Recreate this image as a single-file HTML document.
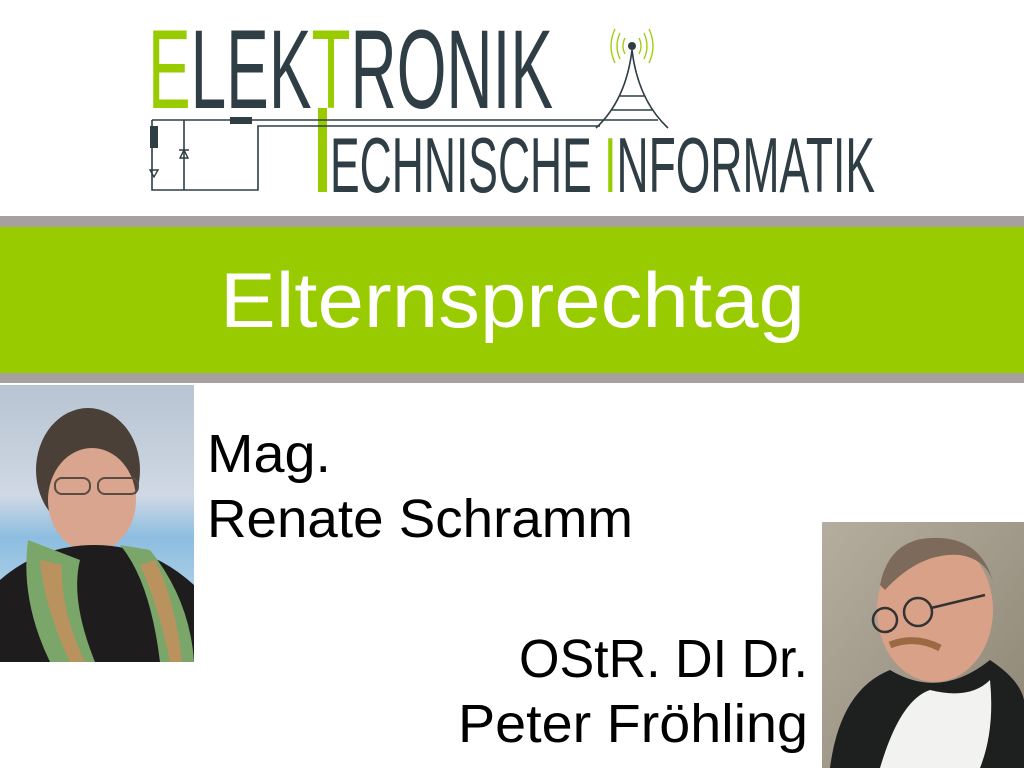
<!DOCTYPE html>
<html><head><meta charset="utf-8"><style>
html,body{margin:0;padding:0;background:#fff;width:1024px;height:768px;overflow:hidden}
svg{display:block}
</style></head><body>
<svg width="1024" height="768" viewBox="0 0 1024 768" xmlns="http://www.w3.org/2000/svg">
<rect width="1024" height="768" fill="#fff"/>
<g font-family="Liberation Sans, sans-serif" fill="#2f3e44">
<text x="148" y="108" font-size="112" textLength="405" lengthAdjust="spacingAndGlyphs"><tspan fill="#99cc00">E</tspan>LEK<tspan fill="#99cc00">T</tspan>RONIK</text>
<text x="330" y="192" font-size="78" textLength="545" lengthAdjust="spacingAndGlyphs">ECHNISCHE <tspan fill="#99cc00">I</tspan>NFORMATIK</text>
</g>
<rect x="318" y="108" width="9" height="84" fill="#99cc00"/>
<g stroke="#2f3e44" stroke-width="1.6" fill="none">
<path d="M152 120 H658 M152 120 V190 H258 V126 H600 M184 120 V190"/>
<path d="M596 128 Q626 100 632 50 Q638 100 668 128"/>
<path d="M620 96 H644 M612 110 H652"/>
</g>
<rect x="150" y="126" width="8" height="22" fill="#2f3e44"/>
<rect x="230" y="117" width="22" height="7" fill="#2f3e44"/>
<path d="M180 158 L188 158 L184 150 Z M179 150 H189" stroke="#2f3e44" fill="none" stroke-width="1.4"/>
<path d="M150 170 L158 170 L154 177 Z" stroke="#2f3e44" fill="none" stroke-width="1.4"/>
<circle cx="632" cy="46" r="4" fill="#2f3e44"/>
<g stroke="#99cc00" fill="none" stroke-width="1.3">
<path d="M625 38 Q621 46 625 54 M639 38 Q643 46 639 54"/>
<path d="M620 33 Q614 46 620 59 M644 33 Q650 46 644 59"/>
<path d="M615 29 Q607 46 615 63 M649 29 Q657 46 649 63"/>
</g>
<rect x="0" y="216" width="1024" height="11" fill="#a6a19e"/>
<rect x="0" y="227" width="1024" height="146" fill="#99cc00"/>
<rect x="0" y="373" width="1024" height="10" fill="#a6a19e"/>
<text x="220" y="327" font-family="Liberation Sans, sans-serif" font-size="78" fill="#fff" textLength="585" lengthAdjust="spacingAndGlyphs">Elternsprechtag</text>
<defs>
<linearGradient id="bg1" x1="0" y1="0" x2="0" y2="1"><stop offset="0" stop-color="#b8c4d2"/><stop offset=".4" stop-color="#cfd8e4"/><stop offset=".55" stop-color="#8cbde0"/><stop offset="1" stop-color="#d8e6ef"/></linearGradient>
<linearGradient id="bg2" x1="0" y1="0" x2="1" y2="1"><stop offset="0" stop-color="#b5ad9e"/><stop offset="1" stop-color="#8d8574"/></linearGradient>
</defs>
<rect x="0" y="385" width="194" height="277" fill="url(#bg1)"/>
<ellipse cx="88" cy="470" rx="52" ry="62" fill="#4a4038"/>
<ellipse cx="92" cy="500" rx="44" ry="52" fill="#d9a58e"/>
<path d="M0 580 Q40 545 95 545 Q150 545 194 585 V662 H0Z" fill="#1e1c1c"/>
<path d="M28 540 Q20 600 50 662 H95 Q70 600 80 560 Z M120 545 Q150 580 160 662 H194 Q190 600 150 550Z" fill="#7aa66a"/>
<path d="M40 560 Q45 610 70 662 H85 Q60 610 62 565Z M140 565 Q160 610 170 662 H182 Q175 600 155 560Z" fill="#d68a5a" opacity=".7"/>
<rect x="55" y="478" width="35" height="16" rx="7" fill="none" stroke="#5a4a44" stroke-width="2"/>
<rect x="98" y="478" width="40" height="16" rx="7" fill="none" stroke="#5a4a44" stroke-width="2"/>
<g font-family="Liberation Sans, sans-serif" fill="#000">
<text x="207" y="472" font-size="54" textLength="124" lengthAdjust="spacingAndGlyphs">Mag.</text>
<text x="207" y="537" font-size="54" textLength="426" lengthAdjust="spacingAndGlyphs">Renate Schramm</text>
<text x="519" y="677" font-size="54" textLength="289" lengthAdjust="spacingAndGlyphs">OStR. DI Dr.</text>
<text x="458" y="742" font-size="54" textLength="350" lengthAdjust="spacingAndGlyphs">Peter Fröhling</text>
</g>
<rect x="822" y="522" width="202" height="246" fill="url(#bg2)"/>
<ellipse cx="935" cy="610" rx="58" ry="72" fill="#d9a288"/>
<path d="M880 585 Q890 535 940 538 Q985 540 995 590 Q990 560 960 555 Q920 552 885 590Z" fill="#7d6a5a"/>
<path d="M830 768 Q840 690 890 670 Q940 700 990 660 Q1020 680 1024 700 V768Z" fill="#1e1f1f"/>
<path d="M880 768 Q900 700 930 690 Q970 700 990 680 Q995 730 980 768Z" fill="#f2f2f0"/>
<path d="M890 645 Q915 635 940 648" stroke="#9a6a45" stroke-width="7" fill="none"/>
<circle cx="885" cy="620" r="12" fill="none" stroke="#333" stroke-width="2.5"/>
<circle cx="918" cy="612" r="14" fill="none" stroke="#333" stroke-width="2.5"/>
<path d="M931 608 L985 595" stroke="#333" stroke-width="2.5"/>
</svg>
</body></html>
